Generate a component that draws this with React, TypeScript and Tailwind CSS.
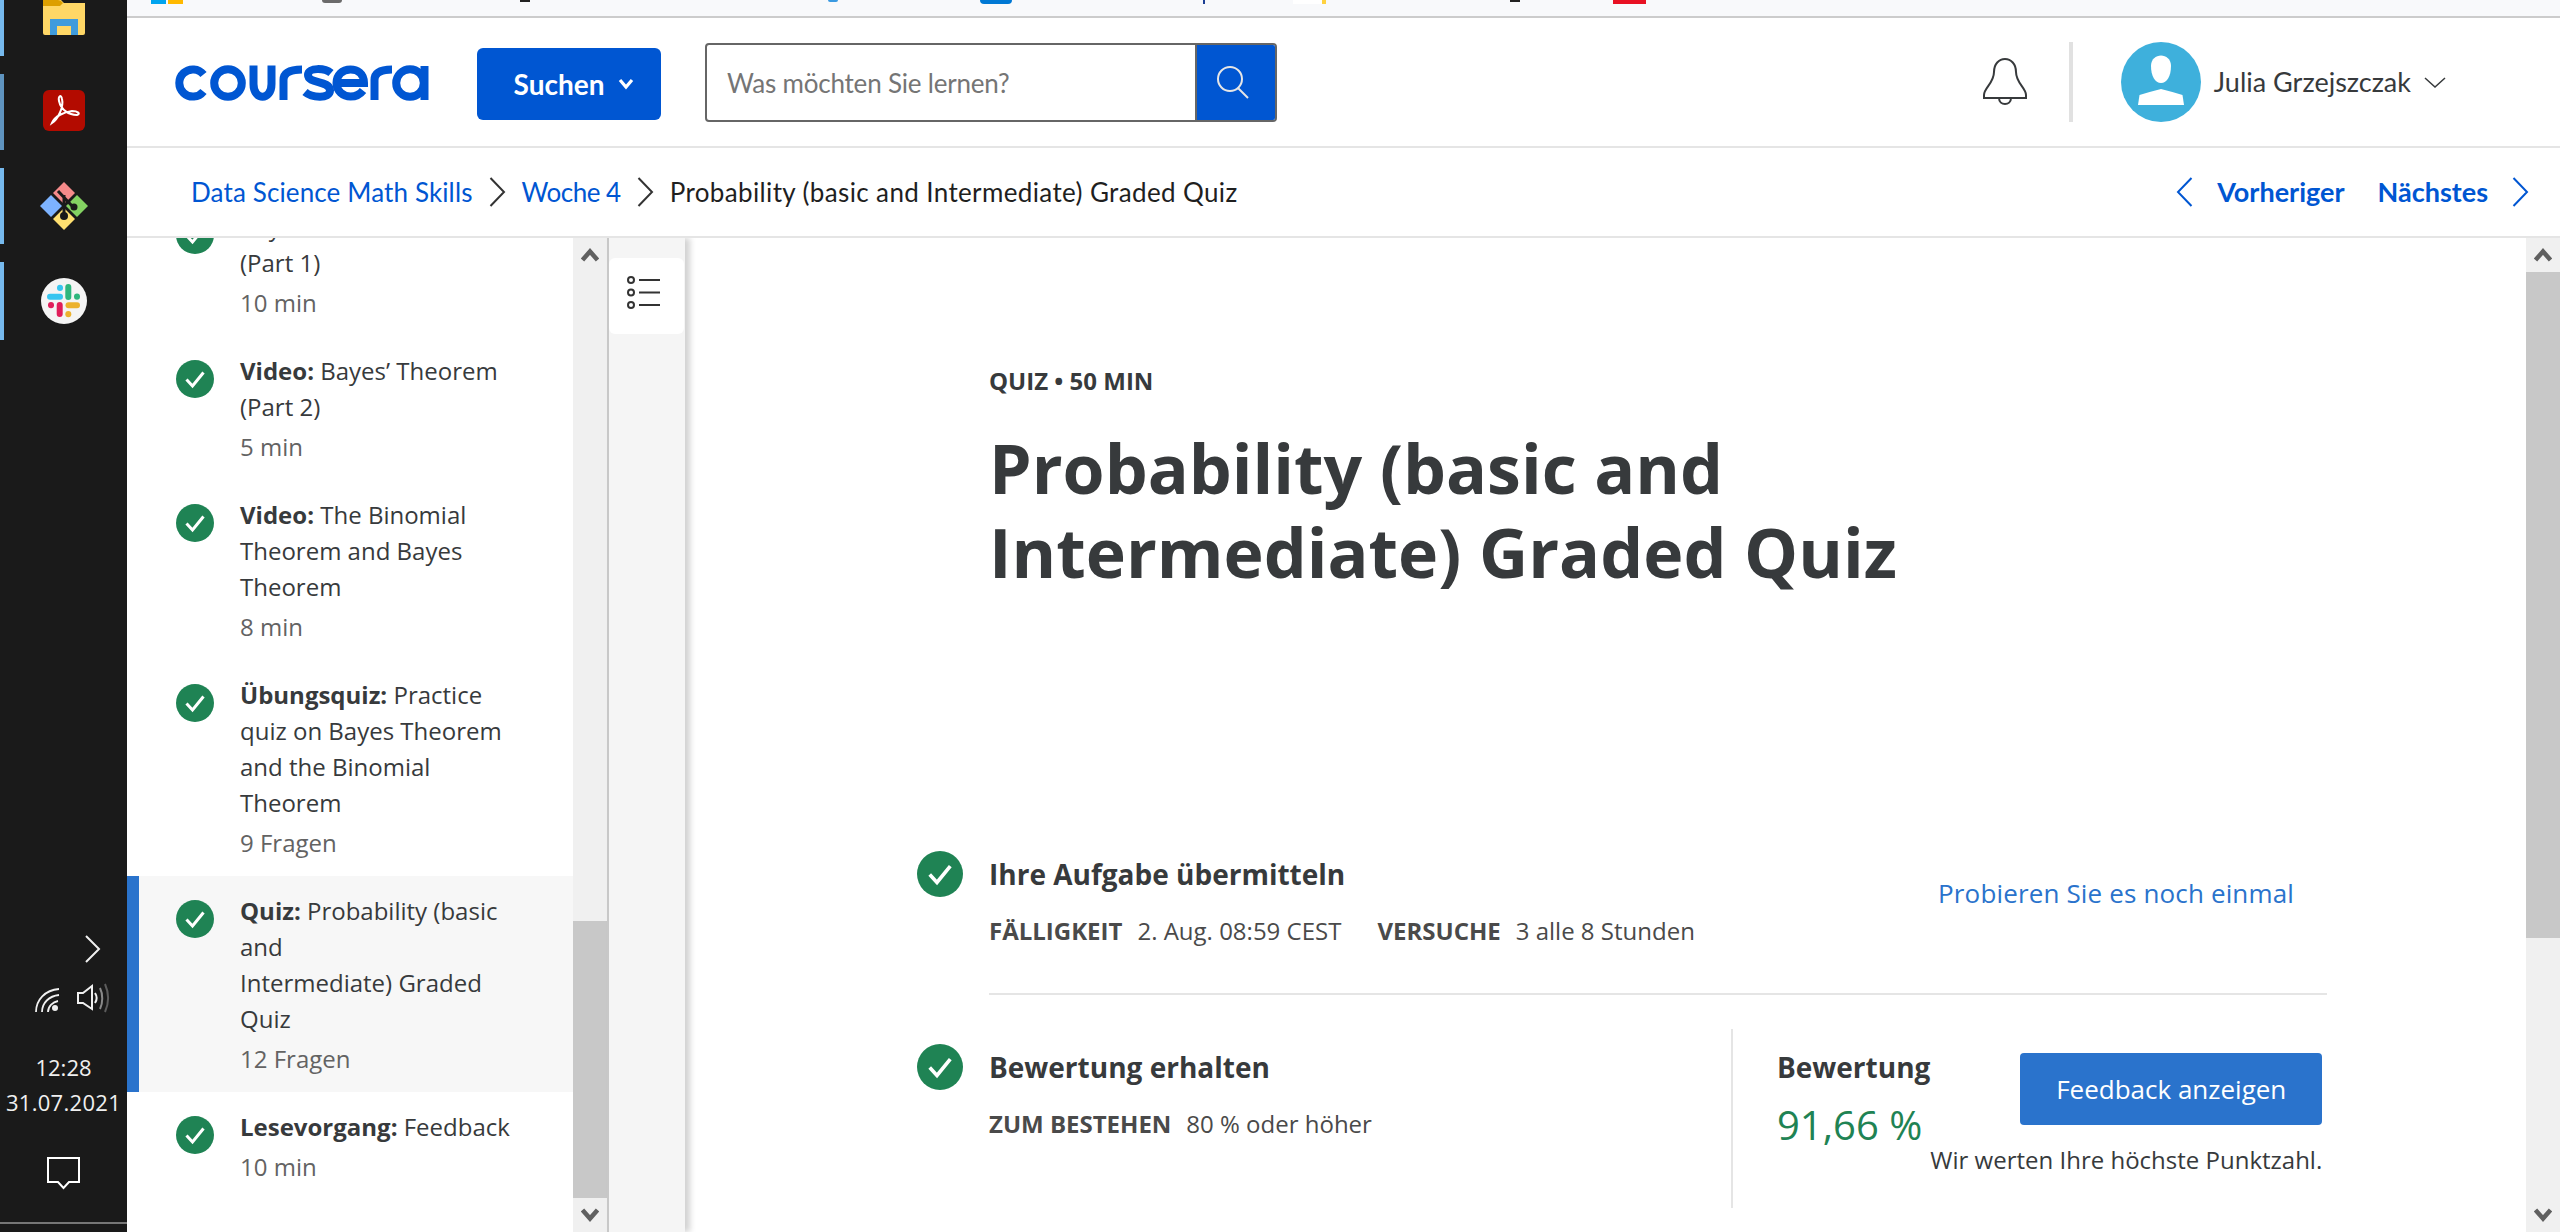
import type { ReactNode } from 'react'

const items = [
  { kind: '', title: 'Bayes’ Theorem', extra: '(Part 1)', meta: '10 min' },
  { kind: 'Video:', title: 'Bayes’ Theorem', extra: '(Part 2)', meta: '5 min' },
  { kind: 'Video:', title: 'The Binomial Theorem and Bayes Theorem', meta: '8 min' },
  { kind: 'Übungsquiz:', title: 'Practice quiz on Bayes Theorem and the Binomial Theorem', meta: '9 Fragen' },
]

const CheckCircle = ({ size }: { size: number }) => (
  <svg width={size} height={size} viewBox="0 0 38 38" className="shrink-0">
    <circle cx="19" cy="19" r="19" fill="#1f8354" />
    <path d="M10.5 19.5 L16.5 26 L27.5 12.5" fill="none" stroke="#fff" strokeWidth="3" />
  </svg>
)

const ScrollArrow = ({ up }: { up?: boolean }) => (
  <div className="h-[34px] flex items-center justify-center shrink-0">
    <svg width="18" height="16" viewBox="0 0 18 16">
      <path d={up ? 'M1.5 13 L9 4.5 L16.5 13' : 'M1.5 3 L9 11.5 L16.5 3'} fill="none" stroke="#606060" strokeWidth="4.5" />
    </svg>
  </div>
)

const Chevron = ({ left, color, h = 30 }: { left?: boolean; color: string; h?: number }) => (
  <svg width="17" height={h} viewBox="0 0 17 30" className="shrink-0">
    <path d={left ? 'M15.5 1 L2 15 L15.5 29' : 'M1.5 1 L15 15 L1.5 29'} fill="none" stroke={color} strokeWidth="2" />
  </svg>
)

const Logo = () => (
  <svg width="254" height="36" viewBox="0 0 254 36" fill="none" stroke="#0056d2" strokeWidth="8" className="shrink-0">
    <path d="M28.5 9.5 A13.6 13.6 0 1 0 28.5 26.5" />
    <circle cx="53" cy="18" r="13.8" />
    <path d="M78.5 0.5 V19 C78.5 36 96.5 36 96.5 19 V0.5" />
    <path d="M108.5 35 V15 C108.5 7 116 4.5 127 4.5" />
    <path d="M156 8 C150 3 133 2 133 10 C133 19 155 15 155 25.5 C155 34 137 33 130 27" />
    <path d="M162 18 H189 C189 8 182 4.5 175.5 4.5 C167 4.5 161.5 10.5 161.5 18 C161.5 26 168 31.5 175.5 31.5 C181 31.5 185 29.5 188 25.5" />
    <path d="M199.5 35 V15 C199.5 7 207 4.5 217 4.5" />
    <circle cx="235" cy="18" r="13.8" />
    <path d="M249.5 1 V35" />
  </svg>
)

const TaskSlot = ({ h, bar, children, className }: { h: string; bar: string; children: ReactNode; className?: string }) => (
  <div className={`${h} ${bar} ${className ?? ''} border-l-4 pr-1 flex justify-center items-center`}>{children}</div>
)

const Taskbar = () => (
  <aside className="w-[127px] shrink-0 h-full bg-[#1a1a1a] flex flex-col">
    <TaskSlot h="h-[56px]" bar="border-[#76b9ed]" className="!items-start">
      <svg width="42" height="35" viewBox="0 0 42 35">
        <path d="M0 0 H18 L21 3 H42 V33 Q42 35 40 35 H2 Q0 35 0 33 Z" fill="#ffd766" />
        <path d="M0 0 H15 Q18 0 20 3 L17 6 H0 Z" fill="#dd9f00" />
        <path d="M7 35 V19 H35 V35 H28 V26 H14 V35 Z" fill="#3f9bdc" />
      </svg>
    </TaskSlot>
    <TaskSlot h="h-[76px] mt-[18px]" bar="border-[#5f94bf]" className="pb-1">
      <svg width="42" height="41" viewBox="0 0 42 41">
        <rect width="42" height="41" rx="6" fill="#b30b00" />
        <path d="M9 33 C15 29 21 17 19 9 C18 4 15 6 16 11 C18 20 26 25 34 25 C38 24 35 21 29 21 C21 22 12 26 9 33 Z" fill="none" stroke="#fff" strokeWidth="2" />
      </svg>
    </TaskSlot>
    <TaskSlot h="h-[76px] mt-[18px]" bar="border-[#76b9ed]">
      <svg width="48" height="48" viewBox="0 0 48 48">
        <path d="M24 0 L35 11 L24 22 L13 11 Z" fill="#f58a8a" />
        <path d="M11 13 L22 24 L11 35 L0 24 Z" fill="#7db3ff" />
        <path d="M37 13 L48 24 L37 35 L26 24 Z" fill="#84d262" />
        <path d="M24 26 L35 37 L24 48 L13 37 Z" fill="#ffe070" />
        <path d="M24 13 V34 M18 9 L33 25" stroke="#1a1a1a" strokeWidth="3" />
        <circle cx="24" cy="34" r="4" fill="#1a1a1a" />
        <circle cx="34" cy="25" r="3.5" fill="#1a1a1a" />
      </svg>
    </TaskSlot>
    <TaskSlot h="h-[78px] mt-[18px]" bar="border-[#76b9ed]">
      <svg width="46" height="46" viewBox="0 0 46 46" fill="none" strokeWidth="6" strokeLinecap="round">
        <circle cx="23" cy="23" r="23" fill="#f4f4f4" stroke="none" />
        <path d="M9 18.7 H19" stroke="#36c5f0" />
        <path d="M19 9.7 V10" stroke="#36c5f0" />
        <path d="M27.3 9 V19" stroke="#2eb67d" />
        <path d="M36 18.5 V18.8" stroke="#2eb67d" />
        <path d="M10 27 V27.3" stroke="#e01e5a" />
        <path d="M18.7 27 V36" stroke="#e01e5a" />
        <path d="M27.5 27.3 H36" stroke="#ecb22e" />
        <path d="M27.3 36 V36.3" stroke="#ecb22e" />
      </svg>
    </TaskSlot>

    <div className="mt-auto flex flex-col items-center font-['Open_Sans',sans-serif] text-[#f0f0f0]">
      <div className="w-full flex justify-end pr-[26px]">
        <svg width="16" height="28" viewBox="0 0 16 28">
          <path d="M1 1 L14 14 L1 27" fill="none" stroke="#f0f0f0" strokeWidth="2" />
        </svg>
      </div>
      <div className="w-full flex items-end pl-[35px] gap-[17px] mt-[20px] h-[30px]">
        <svg width="25" height="25" viewBox="0 0 25 25" fill="none" stroke="#f0f0f0" strokeWidth="1.8">
          <path d="M1 24 C1 12 10 2 24 1" />
          <path d="M7 24 C7 15 14 8 24 7" />
          <path d="M13 24 C13 18 18 14 23 13" />
          <circle cx="20" cy="20" r="3" fill="#f0f0f0" stroke="none" />
        </svg>
        <svg width="33" height="30" viewBox="0 0 33 30" fill="none" stroke="#f0f0f0" strokeWidth="2">
          <path d="M1 10 H6 L15 3 V26 L6 20 H1 Z" />
          <path d="M18 10 C20 13 20 17 18 20" />
          <path d="M23 5 C26 11 26 20 23 26" stroke="#8a8a8a" />
          <path d="M28 1 C32 10 32 20 28 29" stroke="#5c5c5c" />
        </svg>
      </div>
      <div className="text-[22px] leading-[35px] mt-[37px]">12:28</div>
      <div className="text-[22px] leading-[35px] tracking-[0.3px]">31.07.2021</div>
      <svg width="33" height="33" viewBox="0 0 33 33" className="mt-[37px]" fill="none" stroke="#fff" strokeWidth="2">
        <path d="M1 1 H32 V25 H22 L16.5 31 L11 25 H1 Z" />
      </svg>
      <div className="w-full h-[2px] bg-[#777] mt-[32px] mb-[8px]" />
    </div>
  </aside>
)

// only the bottom edge of the browser's bookmark bar is in the shot
const TopStrip = () => (
  <div className="h-[18px] shrink-0 bg-[#f8f9fb] border-b-2 border-[#cccccc] flex items-start">
    <span className="ml-[24px] w-[15px] h-[4px] bg-[#00a4ef]" />
    <span className="ml-[2px] w-[15px] h-[4px] bg-[#ffb900]" />
    <span className="ml-[139px] w-[20px] h-[3px] rounded-b-full bg-[#6b6b6b]" />
    <span className="ml-[178px] w-[10px] h-[2px] bg-[#222]" />
    <span className="ml-[298px] w-[10px] h-[2px] rounded-b-full bg-[#3b9ae1]" />
    <span className="ml-[142px] w-[32px] h-[4px] rounded-b bg-[#0078d4]" />
    <span className="ml-[191px] w-[2px] h-[4px] bg-[#1c3f94]" />
    <span className="ml-[88px] w-[29px] h-[4px] bg-white" />
    <span className="w-[4px] h-[4px] bg-[#ffd23f]" />
    <span className="ml-[184px] w-[10px] h-[2px] bg-[#222]" />
    <span className="ml-[93px] w-[33px] h-[4px] bg-[#e81123]" />
  </div>
)

const Header = () => (
  <header className="h-[130px] shrink-0 bg-white border-b-2 border-[#e5e5e5] flex items-center font-['Lato',sans-serif]">
    <div className="ml-[48px] mt-[1px]"><Logo /></div>
    <button className="ml-[48px] w-[184px] h-[72px] mt-[4px] pl-[10px] rounded-md bg-[#0056d2] text-white text-[28px] font-bold flex items-center justify-center gap-[14px]">
      Suchen
      <svg width="16" height="12" viewBox="0 0 16 12"><path d="M2 2 L8 9 L14 2" fill="none" stroke="#fff" strokeWidth="3.2" /></svg>
    </button>
    <div className="ml-[44px] w-[572px] h-[79px] border-2 border-[#666] rounded-[4px] flex overflow-hidden">
      <div className="flex-1 pl-[20px] pt-[2px] flex items-center text-[26px] tracking-[-0.2px] text-[#757575]">Was möchten Sie lernen?</div>
      <div className="w-[80px] border-l-2 border-[#666] bg-[#0056d2] flex items-center justify-center pr-[6px]">
        <svg width="34" height="34" viewBox="0 0 34 34" fill="none" stroke="#e6e6e6" strokeWidth="2">
          <circle cx="14" cy="14" r="12" />
          <path d="M22 23 L32 33" />
        </svg>
      </div>
    </div>
    <div className="ml-auto flex items-center">
      <svg width="44" height="48" viewBox="0 0 44 48" fill="none" stroke="#373a3c" strokeWidth="2">
        <path d="M1 40 H43 V37 C43 30 33 25 33 14 C33 6 28 1 22 1 C16 1 11 6 11 14 C11 25 1 30 1 37 Z" />
        <path d="M16 40 C16 48 28 48 28 40" />
      </svg>
      <div className="ml-[42px] w-[4px] h-[80px] bg-[#e1e1e1]" />
      <svg width="80" height="80" viewBox="0 0 80 80" className="ml-[48px]">
        <circle cx="40" cy="40" r="40" fill="#3eb0dc" />
        <path d="M30 24 C30 10 50 10 50 24 C50 34 46 41 40 41 C34 41 30 34 30 24 Z" fill="#fff" />
        <path d="M17 63 L18.5 53 Q28 50 40 47 Q52 50 61.5 53 L63 63 Z" fill="#fff" />
      </svg>
      <span className="ml-[13px] text-[27px] text-[#373a3c]">Julia Grzejszczak</span>
      <svg width="22" height="11" viewBox="0 0 22 11" className="ml-[13px] mr-[114px]">
        <path d="M1 1 L11 10 L21 1" fill="none" stroke="#373a3c" strokeWidth="1.5" />
      </svg>
    </div>
  </header>
)

const Breadcrumb = () => (
  <nav className="h-[90px] shrink-0 bg-white border-b-2 border-[#e5e5e5] flex items-center pl-[64px] text-[26px] font-['Lato',sans-serif]">
    <a className="text-[#0056d2] tracking-[0.13px]">Data Science Math Skills</a>
    <span className="mx-[16px]"><Chevron color="#333" /></span>
    <a className="text-[#0056d2] tracking-[-0.5px]">Woche 4</a>
    <span className="mx-[16px]"><Chevron color="#333" /></span>
    <span className="text-[#1f1f1f] tracking-[0.37px]">Probability (basic and Intermediate) Graded Quiz</span>
    <div className="ml-auto flex items-center text-[27px] text-[#0056d2] font-bold pr-[31px]">
      <Chevron left color="#0056d2" />
      <span className="ml-[24px]">Vorheriger</span>
      <span className="ml-[33px]">Nächstes</span>
      <span className="ml-[24px]"><Chevron color="#0056d2" /></span>
    </div>
  </nav>
)

const ItemText = ({ kind, title, extra, meta }: { kind: string; title: string; extra?: string; meta: string }) => (
  <div className="min-w-0">
    <div className="text-[24px] leading-[36px] text-[#373a3c]">
      {kind && <b className="font-bold">{kind} </b>}
      {title}
      {extra && <><br />{extra}</>}
    </div>
    <div className="text-[24px] leading-[36px] text-[#636363] mt-[4px]">{meta}</div>
  </div>
)

const Sidebar = () => (
  <div className="w-[446px] shrink-0 bg-white overflow-hidden font-['Open_Sans',sans-serif]">
    <div className="-mt-[46px]">
      {items.map((it) => (
        <div key={it.title + it.meta} className="flex pl-[49px] pr-[52px] pt-[17px] pb-[15px] gap-[26px]">
          <div className="pt-[7px]"><CheckCircle size={38} /></div>
          <ItemText {...it} />
        </div>
      ))}
      <div className="flex bg-[#f7f7f7] border-l-[12px] border-[#2a73cc] pl-[37px] pr-[40px] pt-[17px] pb-[15px] gap-[26px]">
        <div className="pt-[7px]"><CheckCircle size={38} /></div>
        <ItemText kind="Quiz:" title="Probability (basic and" extra="Intermediate) Graded Quiz" meta="12 Fragen" />
      </div>
      <div className="flex pl-[49px] pr-[52px] pt-[17px] pb-[15px] gap-[26px]">
        <div className="pt-[7px]"><CheckCircle size={38} /></div>
        <ItemText kind="Lesevorgang:" title="Feedback" meta="10 min" />
      </div>
    </div>
  </div>
)

const Scrollbar = ({ before, thumb }: { before: string; thumb: string }) => (
  <div className="w-[34px] shrink-0 h-full bg-[#f0f0f0] flex flex-col">
    <ScrollArrow up />
    <div className={before} />
    <div className={`${thumb} bg-[#c8c8c8]`} />
    <div className="flex-1" />
    <ScrollArrow />
  </div>
)

const Rail = () => (
  <div className="w-[78px] shrink-0 h-full border-l-2 border-[#c8c8c8] bg-[#f5f5f5] pt-[20px] shadow-[5px_0_6px_rgba(0,0,0,0.18)] z-10">
    <div className="h-[76px] w-[75px] bg-white rounded-md flex items-center justify-center pr-[7px] pb-[7px]">
      <svg width="33" height="33" viewBox="0 0 33 33" fill="none" stroke="#333" strokeWidth="2">
        <circle cx="4" cy="4" r="3" />
        <circle cx="4" cy="16.5" r="3" />
        <circle cx="4" cy="29" r="3" />
        <path d="M12 4 H33 M12 16.5 H33 M12 29 H33" />
      </svg>
    </div>
  </div>
)

const Main = () => (
  <main className="flex-1 min-w-0 h-full bg-white pl-[232px] pt-[128px] font-['Open_Sans',sans-serif] text-[#373a3c]">
    <div className="pl-[72px]">
      <div className="text-[24px] leading-[30px] font-bold">QUIZ • 50 MIN</div>
      <h1 className="mt-[30px] text-[68px] leading-[84px] font-bold">
        Probability (basic and
        <br />
        Intermediate) Graded Quiz
      </h1>
    </div>
    <section className="mt-[257px] w-[1410px]">
      <div className="flex justify-between">
        <div className="flex gap-[26px]">
          <CheckCircle size={46} />
          <div>
            <div className="text-[28px] leading-[46px] font-bold">Ihre Aufgabe übermitteln</div>
            <div className="mt-[16px] text-[24px] leading-[36px] flex text-[#4a4a4a]">
              <b className="font-bold">FÄLLIGKEIT</b>
              <span className="ml-[15px]">2. Aug. 08:59 CEST</span>
              <b className="font-bold ml-[36px]">VERSUCHE</b>
              <span className="ml-[15px]">3 alle 8 Stunden</span>
            </div>
          </div>
        </div>
        <a className="mt-[24px] mr-[33px] text-[26px] leading-[36px] font-medium tracking-[0.15px] text-[#2a73cc]">Probieren Sie es noch einmal</a>
      </div>
      <div className="ml-[72px] mt-[44px] h-[2px] bg-[#e5e5e5]" />
      <div className="mt-[34px] h-[179px] flex justify-between">
        <div className="pt-[15px] flex gap-[26px]">
          <CheckCircle size={46} />
          <div>
            <div className="text-[28px] leading-[46px] font-bold">Bewertung erhalten</div>
            <div className="mt-[16px] text-[24px] leading-[36px] flex text-[#4a4a4a]">
              <b className="font-bold">ZUM BESTEHEN</b>
              <span className="ml-[15px]">80 % oder höher</span>
            </div>
          </div>
        </div>
        <div className="w-[596px] border-l-2 border-[#e5e5e5] pl-[44px] pr-[6px] flex justify-between">
          <div className="pt-[15px]">
            <div className="text-[28px] leading-[46px] font-bold">Bewertung</div>
            <div className="mt-[12px] text-[40px] leading-[46px] text-[#1f8354]">91,66 %</div>
          </div>
          <div className="pt-[24px] flex flex-col items-end">
            <button className="w-[302px] h-[72px] rounded-[4px] bg-[#2a73cc] text-white text-[26px] font-medium">Feedback anzeigen</button>
            <div className="mt-[17px] text-[24px] leading-[36px] whitespace-nowrap">Wir werten Ihre höchste Punktzahl.</div>
          </div>
        </div>
      </div>
    </section>
  </main>
)

export default function App() {
  return (
    <div className="w-[2560px] h-[1232px] overflow-hidden flex bg-white">
      <Taskbar />
      <div className="flex-1 min-w-0 flex flex-col">
        <TopStrip />
        <Header />
        <Breadcrumb />
        <div className="flex-1 min-h-0 flex overflow-hidden">
          <Sidebar />
          <Scrollbar before="h-[649px]" thumb="h-[277px]" />
          <Rail />
          <Main />
          <Scrollbar before="h-0" thumb="h-[666px]" />
        </div>
      </div>
    </div>
  )
}
